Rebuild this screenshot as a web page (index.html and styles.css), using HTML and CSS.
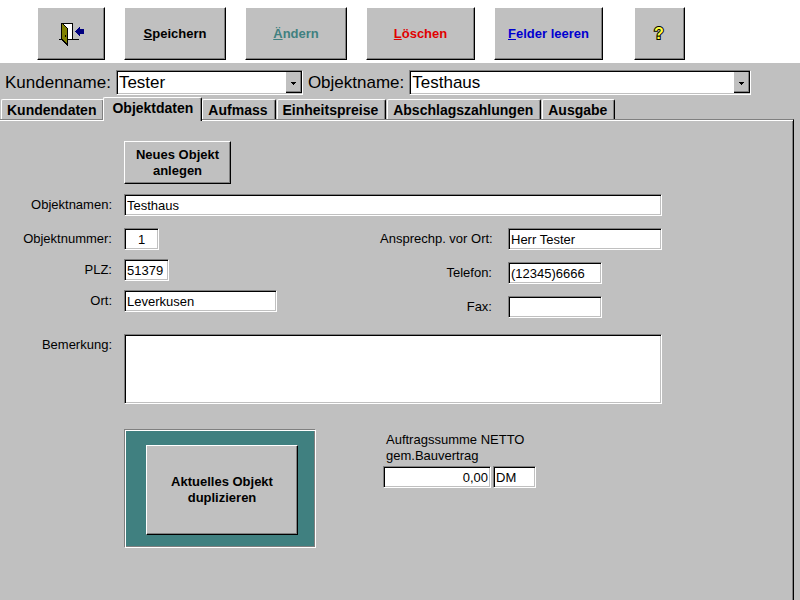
FILE: index.html
```html
<!DOCTYPE html>
<html lang="de">
<head>
    <meta charset="UTF-8">
    <meta name="viewport" content="width=device-width, initial-scale=1.0">
    <title>Objektdaten</title>
    <link rel="stylesheet" href="styles.css">
</head>
<body>
    <!-- Toolbar -->
    <div class="toolbar">
        <button type="button" class="btn tool exit" aria-label="Beenden">
            <svg width="25" height="24" viewBox="0 0 25 24" shape-rendering="crispEdges">
                <rect x="2" y="1" width="12" height="17" fill="#000"/>
                <rect x="3" y="2" width="10" height="15" fill="#fff"/>
                <rect x="0" y="17" width="20" height="1" fill="#000"/>
                <path d="M2 1h1l6 5v18H8l-6-6z" fill="#000"/>
                <path d="M3 2l5 5v15l-5-5z" fill="#808000"/>
                <rect x="6" y="13" width="1" height="2" fill="#000"/>
                <path d="M16 9l5-5v3h4v5h-4v3l-5-5z" fill="#000080"/>
            </svg>
        </button>
        <button type="button" class="btn tool"><u>S</u>peichern</button>
        <button type="button" class="btn tool change"><u>Ä</u>ndern</button>
        <button type="button" class="btn tool wide delete"><u>L</u>öschen</button>
        <button type="button" class="btn tool wide clear"><u>F</u>elder leeren</button>
        <button type="button" class="btn tool help" aria-label="Hilfe">
            <svg width="16" height="18" viewBox="0 0 16 18">
                <text class="help-mark" x="7" y="14" text-anchor="middle">?</text>
            </svg>
        </button>
    </div>

    <!-- Customer and object selection -->
    <div class="selection">
        <label for="kunde">Kundenname:</label>
        <span class="combo combo-kunde">
            <select id="kunde"><option>Tester</option></select>
            <svg class="arrow" viewBox="0 0 16 21" shape-rendering="crispEdges"><path d="M5 10h5v1h-1v1h-1v1h-1v-1h-1v-1h-1z"/></svg>
        </span>
        <label for="objekt">Objektname:</label>
        <span class="combo combo-objekt">
            <select id="objekt"><option>Testhaus</option></select>
            <svg class="arrow" viewBox="0 0 16 21" shape-rendering="crispEdges"><path d="M5 10h5v1h-1v1h-1v1h-1v-1h-1v-1h-1z"/></svg>
        </span>
    </div>

    <div class="tabs" role="tablist">
        <button type="button" class="tab" role="tab">Kundendaten</button>
        <button type="button" class="tab active" role="tab" aria-selected="true">Objektdaten</button>
        <button type="button" class="tab" role="tab">Aufmass</button>
        <button type="button" class="tab" role="tab">Einheitspreise</button>
        <button type="button" class="tab" role="tab">Abschlagszahlungen</button>
        <button type="button" class="tab" role="tab">Ausgabe</button>
    </div>

    <form class="panel">
        <button type="button" class="btn new-object">Neues Objekt<br>anlegen</button>

        <div class="field">
            <label for="objektnamen">Objektnamen:</label>
            <input class="box" id="objektnamen" type="text" value="Testhaus">
        </div>

        <div class="columns">
            <div class="column left">
                <div class="field">
                    <label for="nummer">Objektnummer:</label>
                    <input class="box nummer" id="nummer" type="text" value="1">
                </div>
                <div class="field">
                    <label for="plz">PLZ:</label>
                    <input class="box plz" id="plz" type="text" value="51379">
                </div>
                <div class="field">
                    <label for="ort">Ort:</label>
                    <input class="box ort" id="ort" type="text" value="Leverkusen">
                </div>
            </div>
            <div class="column right">
                <div class="field">
                    <label for="ansprech">Ansprechp. vor Ort:</label>
                    <input class="box" id="ansprech" type="text" value="Herr Tester">
                </div>
                <div class="field">
                    <label for="telefon">Telefon:</label>
                    <input class="box phone" id="telefon" type="text" value="(12345)6666">
                </div>
                <div class="field">
                    <label for="fax">Fax:</label>
                    <input class="box phone" id="fax" type="text" value="">
                </div>
            </div>
        </div>

        <div class="field">
            <label for="bemerkung">Bemerkung:</label>
            <textarea class="box bemerkung" id="bemerkung"></textarea>
        </div>

        <div class="columns bottom">
            <div class="left">
                <div class="frame">
                    <button type="button" class="btn duplicate">Aktuelles Objekt<br>duplizieren</button>
                </div>
            </div>
            <div class="sum">
                <label for="summe">Auftragssumme NETTO<br>gem.Bauvertrag</label>
                <div class="sum-row">
                    <input class="box summe" id="summe" type="text" value="0,00">
                    <input class="box currency" type="text" value="DM" aria-label="Währung">
                </div>
            </div>
        </div>
    </form>
</body>
</html>
```

FILE: styles.css
```css
* {
    box-sizing: border-box;
}
body {
    display: flex;
    flex-direction: column;
    min-height: 100vh;
    margin: 0;
    background-color: #c0c0c0;
    color: #000;
    font-family: "Liberation Sans", Arial, sans-serif;
    font-size: 13px;
    line-height: 16px;
}
button, input, select, textarea {
    font: inherit;
    color: inherit;
    margin: 0;
    border-radius: 0;
}

/* Raised buttons */
.btn {
    padding: 0;
    background-color: #c0c0c0;
    border: 1px solid;
    border-color: #fff #000 #000 #fff;
    box-shadow: inset -1px -1px 0 #808080;
    font-weight: bold;
    text-align: center;
}

/* Toolbar */
.toolbar {
    display: flex;
    gap: 19px;
    height: 63px;
    padding: 7px 37px 3px;
    background-color: #fff;
}
.tool {
    display: flex;
    justify-content: center;
    align-items: center;
    width: 102px;
}
.exit { width: 68px; }
.wide { width: 109px; }
.help { width: 51px; margin-left: 12px; }
.change { color: #408080; }
.delete { color: #e00000; }
.clear { color: #0000d0; }
.help-mark {
    font-size: 16px;
    font-weight: bold;
    fill: #ffff40;
    stroke: #000;
    stroke-width: 2px;
    paint-order: stroke;
}

/* Selection row */
.selection {
    display: flex;
    align-items: center;
    gap: 5px;
    padding: 7px 49px 2px 5px;
    font-size: 17px;
    line-height: 20px;
}
.combo {
    position: relative;
    display: flex;
    height: 25px;
}
.combo-kunde { width: 187px; }
.combo-objekt { flex: 1; }
.combo select, .box {
    background-color: #fff;
    border: 1px solid;
    border-color: #808080 #fff #fff #808080;
    box-shadow: inset 1px 1px 0 #000, inset -1px -1px 0 #c0c0c0;
}
.combo select {
    width: 100%;
    padding: 0 18px 0 2px;
    appearance: none;
}
.arrow {
    position: absolute;
    top: 2px;
    right: 1px;
    width: 16px;
    height: 21px;
    background-color: #c0c0c0;
    box-shadow: inset -1px -1px 0 #000, inset -2px -2px 0 #808080;
    pointer-events: none;
}

/* Tabs */
.tabs {
    display: flex;
    align-items: flex-end;
    padding-left: 1px;
}
.tab {
    height: 20px;
    padding: 0 7px 0 5px;
    background-color: #c0c0c0;
    border: 1px solid;
    border-color: #fff #000 #c0c0c0 #fff;
    border-bottom: 0;
    border-radius: 2px 2px 0 0;
    box-shadow: inset -1px 0 0 #808080;
    font-size: 14px;
    font-weight: bold;
    white-space: nowrap;
}
.tab + .tab {
    margin-left: 1px;
}
.tabs .active {
    z-index: 1;
    height: 24px;
    margin: 0 -1px -2px;
    padding: 0 8px 4px;
}

/* Form */
.panel {
    flex: 1;
    display: flex;
    flex-direction: column;
    margin-right: 6px;
    padding: 21px 131px 20px 0;
    border-top: 1px solid #808080;
    border-right: 1px solid #000;
    box-shadow: inset 0 1px 0 #fff, inset -1px 0 0 #808080;
}
.new-object {
    width: 107px;
    height: 43px;
    margin: 0 0 10px 124px;
}
.field {
    display: flex;
    align-items: flex-start;
    gap: 12px;
}
.field label {
    flex: none;
    width: 112px;
    padding-top: 3px;
    text-align: right;
    white-space: nowrap;
}
.box {
    flex: 1;
    min-width: 0;
    height: 22px;
    padding: 0 2px;
}
.columns {
    display: flex;
    margin: 12px 0 16px;
}
.left {
    flex: none;
    width: 380px;
}
.column {
    display: flex;
    flex-direction: column;
    gap: 9px;
}
.right {
    flex: 1;
    gap: 12px;
    min-width: 0;
}
.right .field {
    gap: 16px;
}
.nummer, .plz, .ort, .phone, .summe, .currency {
    flex: none;
}
.nummer { width: 35px; text-align: center; }
.plz { width: 45px; }
.ort { width: 153px; }
.phone { width: 94px; }
.bemerkung {
    height: 70px;
    resize: none;
}

/* Duplicate frame and order total */
.bottom {
    margin: 25px 0 0;
}
.frame {
    width: 192px;
    margin-left: 124px;
    padding: 15px 17px 12px 21px;
    background-color: #408080;
    border: 1px solid;
    border-color: #808080 #fff #fff #808080;
    box-shadow: inset 1px 1px 0 #fff, inset -1px -1px 0 #808080;
}
.duplicate {
    width: 100%;
    height: 90px;
}
.sum {
    padding: 3px 0 0 3px;
}
.sum label {
    display: block;
    padding-left: 3px;
}
.sum-row {
    display: flex;
    gap: 2px;
    margin-top: 2px;
}
.summe { width: 108px; text-align: right; }
.currency { width: 43px; }
```
